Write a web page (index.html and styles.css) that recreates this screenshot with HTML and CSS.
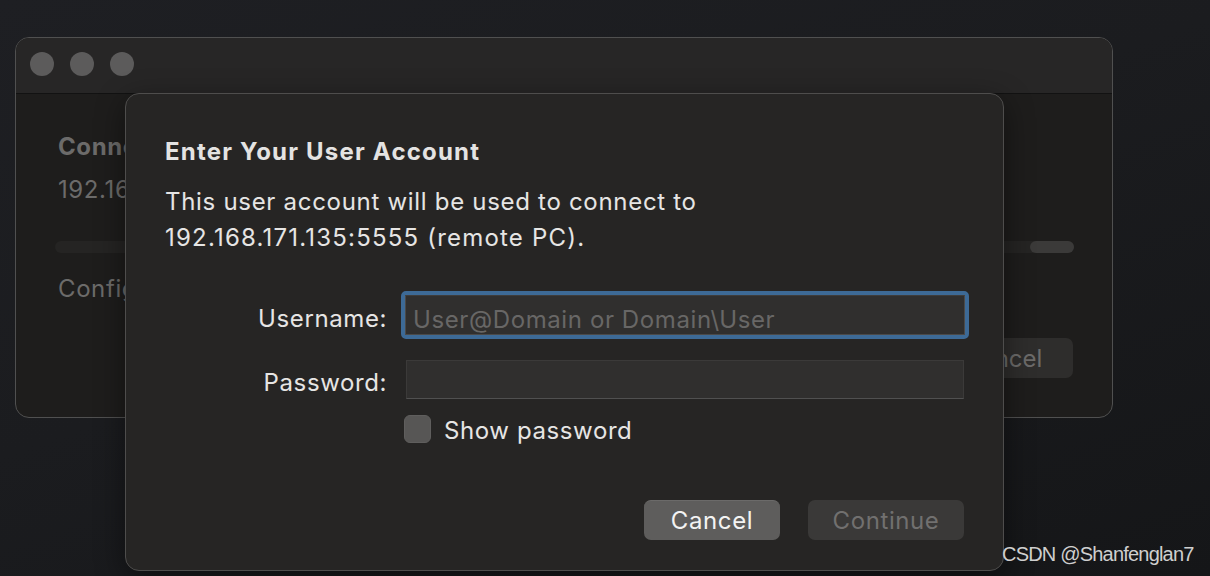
FILE: index.html
```html
<!DOCTYPE html>
<html>
<head>
<meta name="viewport" content="width=device-width, initial-scale=1">
<link rel="stylesheet" href="styles.css">
</head>
<body>

<div class="window">
  <div class="titlebar">
    <span class="light"></span>
    <span class="light"></span>
    <span class="light"></span>
  </div>
  <div class="window-body">
    <div class="status-title">Connecting to</div>
    <div class="status-host">192.168.171.135:5555</div>
    <div class="progress"><div class="progress-thumb"></div></div>
    <div class="status-step">Configuring remote PC...</div>
    <div class="back-actions">
      <button class="back-btn">Cancel</button>
    </div>
  </div>
</div>

<!-- account sheet on top of the connection window -->
<div class="sheet">
  <h2 class="sheet-title">Enter Your User Account</h2>
  <p class="sheet-text">This user account will be used to connect to<br><span class="host">192.168.171.135:5555 (remote PC).</span></p>

  <div class="form">
    <label class="form-label" for="user">Username:</label>
    <div class="focus-ring">
      <input type="text" id="user" class="field" placeholder="User@Domain or Domain\User">
    </div>
    <label class="form-label" for="pass">Password:</label>
    <input type="password" id="pass" class="field field-plain">
    <div></div>
    <label class="check">
      <span class="check-box"></span>
      <span class="check-text">Show password</span>
    </label>
  </div>

  <div class="sheet-actions">
    <button class="btn btn-cancel">Cancel</button>
    <button class="btn btn-continue" disabled>Continue</button>
  </div>
</div>

<div class="watermark">CSDN @Shanfenglan7</div>

</body>
</html>
```

FILE: styles.css
```css
* {
  box-sizing: border-box;
}

body {
  margin: 0;
  width: 1210px;
  height: 576px;
  overflow: hidden;
  font-family: "Inter", "Liberation Sans", sans-serif;
  background: linear-gradient(160deg, #1e1f23 0%, #1b1c1f 45%, #151618 100%);
  position: relative;
}

/* back window */
.window {
  margin: 37px 0 0 15px;
  width: 1098px;
  height: 381px;
  border: 1px solid #505050;
  border-radius: 14px;
  background: #1e1d1c;
  overflow: hidden;
}

.titlebar {
  height: 56px;
  background: #272626;
  border-bottom: 1px solid #121212;
  display: flex;
  align-items: center;
  gap: 16px;
  padding: 0 0 3px 14px;
}

.light {
  width: 24px;
  height: 24px;
  border-radius: 50%;
  background: #5c5b5b;
}

.window-body {
  padding: 38px 38px 0 42px;
  color: #6c6b6a;
  font-size: 24px;
  letter-spacing: 0.6px;
}

.status-title,
.status-host,
.status-step {
  line-height: 30px;
  white-space: nowrap;
}

.status-title {
  font-weight: 700;
}

.status-host {
  margin-top: 13px;
}

.progress {
  margin: 36px 0 0 -3px;
  width: 1019px;
  height: 12px;
  border-radius: 6px;
  background: #252423;
  display: flex;
  justify-content: flex-end;
}

.progress-thumb {
  width: 44px;
  height: 12px;
  border-radius: 6px;
  background: #3b3a39;
}

.status-step {
  margin-top: 21px;
}

.back-actions {
  display: flex;
  justify-content: flex-end;
  margin: 34px 1px 0 0;
}

.back-btn {
  width: 140px;
  height: 40px;
  border: none;
  border-radius: 7px;
  background: #2e2d2c;
  color: #6c6b6a;
  font: inherit;
  font-size: 24px;
}

/* sheet */
.sheet {
  position: absolute;
  left: 125px;
  top: 93px;
  width: 879px;
  height: 478px;
  background: #262524;
  border: 1px solid #4e4d4c;
  border-radius: 14px;
  box-shadow: 0 8px 30px rgba(0, 0, 0, 0.45);
  padding: 40px 39px 30px 39px;
  color: #e6e5e4;
  display: flex;
  flex-direction: column;
  letter-spacing: 0.6px;
}

.sheet-title {
  margin: 0;
  font-size: 24px;
  font-weight: 700;
  line-height: 36px;
  color: #e4e3e2;
  letter-spacing: 1.2px;
}

.sheet-text {
  margin: 14px 0 0 0;
  font-size: 24px;
  line-height: 36px;
  letter-spacing: 0.7px;
}

.host {
  letter-spacing: 1.2px;
}

.form {
  margin-top: 35px;
  display: grid;
  grid-template-columns: 222px 558px;
  column-gap: 19px;
  row-gap: 21px;
  align-items: center;
}

.form-label {
  text-align: right;
  font-size: 24px;
  padding-top: 6px;
  color: #e6e5e4;
}

.focus-ring {
  margin: 0 -5px;
  border: 4px solid #3d6a96;
  border-radius: 5px;
}

.field {
  display: block;
  width: 100%;
  height: 40px;
  background: #302f2e;
  border: 1px solid #4b4a49;
  border-top-color: #3e3d3c;
  padding: 8px 7px 0 7px;
  font-family: inherit;
  font-size: 24px;
  letter-spacing: 0.6px;
  color: #e6e5e4;
  outline: none;
}

.field::placeholder {
  color: #686766;
}

.field-plain {
  height: 39px;
  border-color: #3b3a39;
  border-bottom-color: #505050;
}

.check {
  margin: -7px 0 0 -2px;
  display: flex;
  align-items: center;
  gap: 13px;
  font-size: 24px;
  color: #e6e5e4;
}

.check-box {
  width: 27px;
  height: 28px;
  border-radius: 6px;
  background: #575655;
  border: 1px solid #5f5e5d;
}

.check-text {
  padding-top: 3px;
}

.sheet-actions {
  margin-top: auto;
  display: flex;
  justify-content: flex-end;
  gap: 28px;
}

.btn {
  height: 40px;
  border: none;
  border-radius: 7px;
  font-family: inherit;
  font-size: 24px;
  letter-spacing: 0.6px;
}

.btn-cancel {
  width: 136px;
  background: #5e5d5c;
  color: #f3f3f3;
  border-top: 1px solid #6b6a69;
}

.btn-continue {
  width: 156px;
  background: #3a3938;
  color: #71706f;
}

.watermark {
  position: absolute;
  left: 1002px;
  top: 543px;
  font-family: "Liberation Sans", sans-serif;
  font-size: 20px;
  color: #cfcfcf;
  letter-spacing: -0.8px;
}
```
